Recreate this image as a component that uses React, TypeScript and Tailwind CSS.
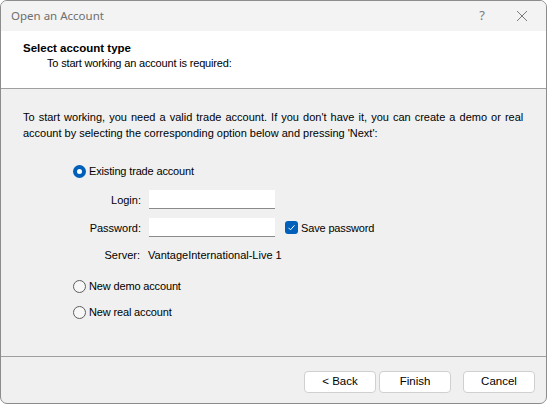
import React from "react";

function Radio({ checked, label }: { checked?: boolean; label: string }) {
  return (
    <div className="flex items-center h-[16px]">
      {checked ? (
        <span className="w-[13px] h-[13px] rounded-full bg-[#005fb8] flex items-center justify-center">
          <span className="w-[5px] h-[5px] rounded-full bg-white" />
        </span>
      ) : (
        <span className="w-[13px] h-[13px] rounded-full border border-[#5d5d5d] bg-[#f7f7f7]" />
      )}
      <span className="ml-[3px] tracking-[-0.15px]">{label}</span>
    </div>
  );
}

function Btn({ label }: { label: string }) {
  return (
    <button className="w-[72px] h-[22px] rounded-[4px] border border-[#d0d0d0] bg-white text-[11.5px] text-black flex items-center justify-center">
      {label}
    </button>
  );
}

export default function App() {
  return (
    <div
      className="w-[547px] h-[404px] border border-[#8c8c8c] rounded-[7px] overflow-hidden bg-[#f0f0f0] flex flex-col text-[11px] text-black"
      style={{ fontFamily: '"Liberation Sans", Arial, sans-serif' }}
    >
      <div
        className="h-[30px] shrink-0 bg-[#f3f3f3] flex items-center pl-[10px] text-[#6e6e6e] text-[11.5px]"
        style={{ fontFamily: '"Noto Sans", "Open Sans", sans-serif' }}
      >
        <span className="flex-1">Open an Account</span>
        <span className="w-[20px] text-center text-[#7a7a7a] mr-[24px] text-[13px]">?</span>
        <svg width="12" height="12" viewBox="0 0 12 12" className="mr-[18px]">
          <path d="M1 1 L11 11 M11 1 L1 11" stroke="#7a7a7a" strokeWidth="1" />
        </svg>
      </div>
      <div className="h-[57px] shrink-0 bg-white pt-[9px] pl-[22px] leading-[16px]">
        <div className="font-bold text-[11.5px]">Select account type</div>
        <div className="pl-[24px] mt-[-1px] tracking-[-0.17px]">To start working an account is required:</div>
      </div>
      <div className="h-px shrink-0 bg-[#a0a0a0]" />
      <div className="flex-1 pt-[20px] pl-[22px] leading-[16px]">
        <div className="whitespace-nowrap [word-spacing:1px]">
          To start working, you need a valid trade account. If you don't have it, you can create a demo or real
        </div>
        <div>account by selecting the corresponding option below and pressing 'Next':</div>
        <div className="ml-[50px] mt-[22px]">
          <Radio checked label="Existing trade account" />
          <div className="grid grid-cols-[68px_126px_auto] gap-x-[8px] items-center mt-[11px]">
            <div className="text-right">Login:</div>
            <div className="h-[19px] bg-white border-b border-[#8a8a8a]" />
            <div />
            <div className="text-right mt-[9px]">Password:</div>
            <div className="h-[19px] bg-white border-b border-[#8a8a8a] mt-[9px]" />
            <div className="flex items-center mt-[9px] ml-[2px]">
              <span className="w-[13px] h-[13px] rounded-[3px] bg-[#005fb8] flex items-center justify-center">
                <svg width="9" height="9" viewBox="0 0 9 9">
                  <path d="M1.5 4.8 L3.5 6.8 L7.5 2.3" stroke="white" strokeWidth="1" fill="none" />
                </svg>
              </span>
              <span className="ml-[3px] tracking-[-0.15px]">Save password</span>
            </div>
            <div className="text-right mt-[10px] pr-[1px]">Server:</div>
            <div className="mt-[10px] -ml-[1px] whitespace-nowrap col-span-2">VantageInternational-Live 1</div>
          </div>
          <div className="mt-[15px]">
            <Radio label="New demo account" />
          </div>
          <div className="mt-[10px]">
            <Radio label="New real account" />
          </div>
        </div>
      </div>
      <div className="h-px shrink-0 bg-[#a0a0a0]" />
      <div className="h-[46px] shrink-0 flex justify-end pt-[14px] pr-[11px]">
        <Btn label="< Back" />
        <div className="ml-[3px]">
          <Btn label="Finish" />
        </div>
        <div className="ml-[12px]">
          <Btn label="Cancel" />
        </div>
      </div>
    </div>
  );
}
